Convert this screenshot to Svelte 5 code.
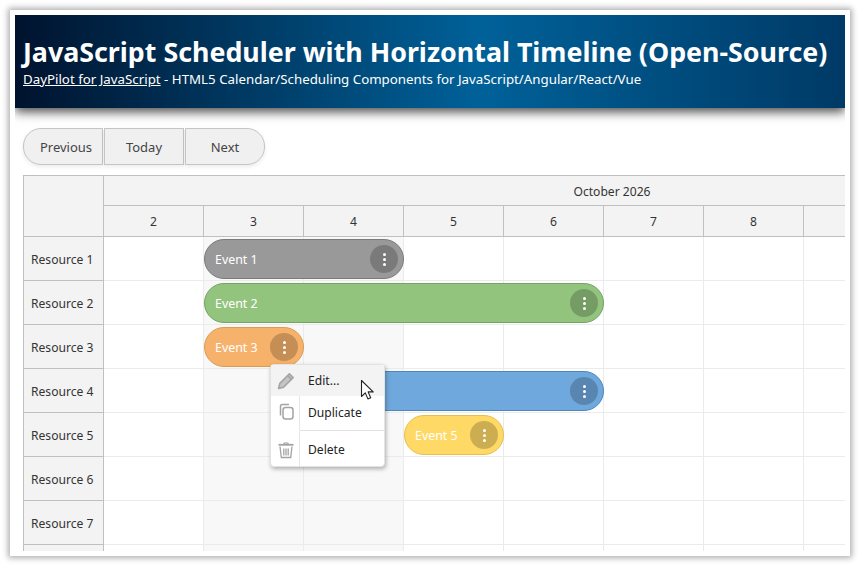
<script>
  const days = [2, 3, 4, 5, 6, 7, 8, 9];
  const weekend = [3, 4];
  const resources = ["Resource 1", "Resource 2", "Resource 3", "Resource 4", "Resource 5", "Resource 6", "Resource 7", ""];
  const events = [
    { text: "Event 1", row: 0, start: 1, span: 2, cls: "gray" },
    { text: "Event 2", row: 1, start: 1, span: 4, cls: "green" },
    { text: "Event 3", row: 2, start: 1, span: 1, cls: "orange" },
    { text: "Event 4", row: 3, start: 2, span: 3, cls: "blue" },
    { text: "Event 5", row: 4, start: 3, span: 1, cls: "yellow" }
  ];
</script>

<div class="frame">
  <header class="banner">
    <h1>JavaScript Scheduler with Horizontal Timeline (Open-Source)</h1>
    <p><a href="#top">DayPilot for JavaScript</a> - HTML5 Calendar/Scheduling Components for JavaScript/Angular/React/Vue</p>
  </header>

  <div class="content">
    <div class="toolbar">
      <button type="button" class="first">Previous</button>
      <button type="button">Today</button>
      <button type="button" class="last">Next</button>
    </div>

    <div class="scheduler">
      <div class="corner"></div>
      <div class="time-head">
        <div class="month">October 2026</div>
        <div class="day-row">
          {#each days as d}
            <div class="day">{d}</div>
          {/each}
        </div>
      </div>

      <div class="res-col">
        {#each resources as r}
          <div class="res">{r}</div>
        {/each}
      </div>

      <div class="rows">
        {#each resources as _}
          <div class="row">
            {#each days as d}
              <div class="cell" class:weekend={weekend.includes(d)}></div>
            {/each}
          </div>
        {/each}

        {#each events as e}
          <div class="event {e.cls}" style="left: {e.start * 100}px; top: {e.row * 44 + 2}px; width: {e.span * 100}px">
            <span class="label">{e.text}</span>
            <span class="more"><i></i><i></i><i></i></span>
          </div>
        {/each}

        <div class="menu">
          <div class="item active edit">
            <span class="ico">
              <svg width="18" height="18" viewBox="0 0 18 18" fill="none" stroke="#a3a3a3" stroke-width="1.5" stroke-linejoin="round">
                <path d="M1.5 16.5 2.8 11.4 12.4 1.8 16.2 5.6 6.6 15.2Z" fill="#c4c4c4" />
                <path d="M10.8 3.6 14.4 7.2" />
              </svg>
            </span>
            <span class="txt">Edit...</span>
          </div>
          <div class="item dup">
            <span class="ico">
              <svg width="18" height="18" viewBox="0 0 18 18" fill="none" stroke="#a3a3a3" stroke-width="1.5">
                <path d="M3.5 12.5V3.5Q3.5 1.5 5.5 1.5H12" />
                <rect x="6" y="4.5" width="10" height="11.5" rx="2.5" />
              </svg>
            </span>
            <span class="txt">Duplicate</span>
          </div>
          <div class="sep"></div>
          <div class="item del">
            <span class="ico">
              <svg width="18" height="18" viewBox="0 0 18 18" fill="none" stroke="#a3a3a3" stroke-width="1.3">
                <path d="M1.5 3.8H16.5" stroke-width="1.8" />
                <path d="M6.5 3C7 1.5 11 1.5 11.5 3" />
                <path d="M3 5.5 4.3 16.5H13.7L15 5.5" />
                <path d="M6.8 7.5V14.5M9 7.5V14.5M11.2 7.5V14.5" />
              </svg>
            </span>
            <span class="txt">Delete</span>
          </div>
        </div>

        <svg class="cursor" width="16" height="22" viewBox="0 0 16 22">
          <path d="M1.5 1.5V17.5L5.3 13.9 7.9 19.9 10.7 18.7 8.1 12.9H13.2Z" fill="#fff" stroke="#222" stroke-width="1.1" stroke-linejoin="round" />
        </svg>
      </div>
    </div>
  </div>
</div>

<style>
  :global(body) {
    margin: 0;
    background: #fff;
  }

  .frame {
    box-sizing: border-box;
    width: 840px;
    height: 546px;
    margin: 10px;
    padding: 5px;
    background: #fff;
    box-shadow: 0 0 6px 2px rgba(0, 0, 0, 0.32);
    font-family: "Noto Sans", "Open Sans", sans-serif;
    display: flex;
    flex-direction: column;
    overflow: hidden;
  }

  .banner {
    flex: none;
    box-sizing: border-box;
    height: 93px;
    padding: 20px 8px 0;
    background: linear-gradient(to right, #00132e 0%, #006199 56%, #003a66 100%);
    box-shadow: 0 4px 10px rgba(0, 0, 0, 0.7);
    clip-path: inset(0 0 -24px 0);
    color: #fff;
    position: relative;
    z-index: 2;
  }

  .banner h1 {
    margin: 0;
    font-size: 26.8px;
    line-height: 33px;
    font-weight: 700;
    white-space: nowrap;
  }

  .banner p {
    margin: 2px 0 0;
    font-size: 13.3px;
    line-height: 18px;
    white-space: nowrap;
  }

  .banner a {
    color: #fff;
    text-decoration: underline;
  }

  .content {
    flex: 1;
    min-height: 0;
    padding: 20px 0 0 8px;
    display: flex;
    flex-direction: column;
    gap: 10px;
  }

  .toolbar {
    display: flex;
    gap: 1px;
    flex: none;
  }

  .toolbar button {
    width: 80px;
    height: 37px;
    padding: 0;
    background: #f0f0f0;
    border: 1px solid #c4c4c4;
    color: #444;
    font: 13px "Noto Sans", "Open Sans", sans-serif;
    box-shadow: 0 2px 4px rgba(0, 0, 0, 0.08);
  }

  .toolbar .first {
    padding-left: 6px;
    border-radius: 18px 0 0 18px;
  }

  .toolbar .last {
    border-radius: 0 18px 18px 0;
  }

  .scheduler {
    flex: 1;
    min-height: 0;
    display: grid;
    grid-template-columns: 80px 1fr;
    grid-template-rows: 61px 1fr;
    border-top: 1px solid #c0c0c0;
    border-left: 1px solid #c0c0c0;
    overflow: hidden;
    font-size: 12.1px;
    color: #333;
  }

  .corner {
    background: #f3f3f3;
    border-right: 1px solid #c0c0c0;
    border-bottom: 1px solid #c0c0c0;
  }

  .time-head {
    min-width: 0;
    overflow: hidden;
    background: #f3f3f3;
    border-bottom: 1px solid #c0c0c0;
  }

  .month {
    box-sizing: border-box;
    width: 1016px;
    height: 30px;
    line-height: 31px;
    text-align: center;
    border-bottom: 1px solid #c0c0c0;
  }

  .day-row {
    display: flex;
  }

  .day {
    flex: 0 0 100px;
    box-sizing: border-box;
    height: 30px;
    line-height: 31px;
    text-align: center;
    border-right: 1px solid #c0c0c0;
  }

  .res-col {
    overflow: hidden;
    min-height: 0;
  }

  .res {
    box-sizing: border-box;
    width: 80px;
    height: 44px;
    padding-left: 7px;
    line-height: 45px;
    background: #f3f3f3;
    border-right: 1px solid #c0c0c0;
    border-bottom: 1px solid #c0c0c0;
  }

  .rows {
    position: relative;
    min-height: 0;
    min-width: 0;
    overflow: hidden;
  }

  .row {
    display: flex;
    height: 44px;
  }

  .cell {
    flex: 0 0 100px;
    box-sizing: border-box;
    border-right: 1px solid #ebebeb;
    border-bottom: 1px solid #ebebeb;
    background: #fff;
  }

  .cell.weekend {
    background: #f8f8f8;
  }

  .event {
    position: absolute;
    box-sizing: border-box;
    height: 40px;
    padding: 0 5px 0 10px;
    border: 1px solid;
    border-radius: 20px;
    display: flex;
    align-items: center;
    justify-content: space-between;
    color: #fff;
    font-size: 12.4px;
  }

  .more {
    width: 28px;
    height: 28px;
    border-radius: 50%;
    background: rgba(0, 0, 0, 0.2);
    display: flex;
    flex-direction: column;
    align-items: center;
    justify-content: center;
    gap: 2px;
  }

  .more i {
    width: 3px;
    height: 3px;
    border-radius: 50%;
    background: #fff;
  }

  .gray { background: #999; border-color: #7b7b7b; }
  .green { background: #93c47d; border-color: #76a264; }
  .orange { background: #f6b26b; border-color: #dc9c52; }
  .blue { background: #6fa8dc; border-color: #4f86bb; }
  .yellow { background: #ffd966; border-color: #e6c04f; }

  .menu {
    position: absolute;
    left: 166px;
    top: 127px;
    width: 115px;
    box-sizing: border-box;
    background: #fff;
    border: 1px solid #e3e3e3;
    border-radius: 4px;
    box-shadow: 1px 2px 4px rgba(0, 0, 0, 0.3);
    color: #222;
    font-size: 12.1px;
    z-index: 3;
  }

  .item {
    display: flex;
    align-items: center;
  }

  .item.edit {
    height: 31px;
  }

  .item.dup {
    height: 34px;
  }

  .item.dup .txt {
    margin-bottom: 2px;
  }

  .item.dup svg {
    margin-bottom: 2px;
  }

  .item.del {
    height: 35px;
  }

  .item.del .txt {
    margin-top: 2px;
  }

  .item.del svg {
    margin-top: 2px;
  }

  .item.active {
    background: #f3f3f3;
  }

  .ico {
    flex: none;
    width: 29px;
    height: 100%;
    padding-left: 2px;
    display: flex;
    align-items: center;
    justify-content: center;
    box-sizing: border-box;
    border-right: 1px solid #e6e6e6;
  }

  .item.active .ico {
    border-right-color: transparent;
  }

  .txt {
    padding-left: 8px;
  }

  .sep {
    height: 1px;
    margin-left: 29px;
    background: #e0e0e0;
  }

  .cursor {
    position: absolute;
    left: 256px;
    top: 142px;
    z-index: 4;
  }
</style>
